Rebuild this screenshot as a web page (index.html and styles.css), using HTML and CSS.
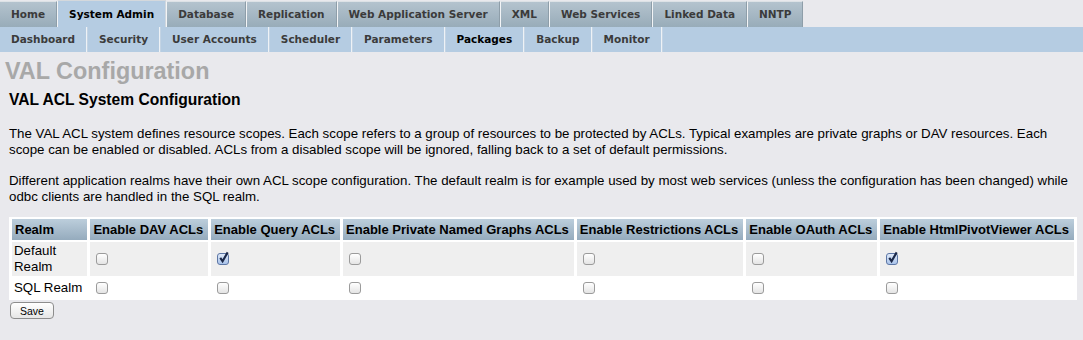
FILE: index.html
```html
<!DOCTYPE html>
<html lang="en">
<head>
    <meta charset="UTF-8">
    <title>VAL Configuration</title>
    <link rel="stylesheet" href="styles.css">
</head>
<body>
    <ul class="tabs">
        <li><a href="#">Home</a></li>
        <li class="active"><a href="#">System Admin</a></li>
        <li><a href="#">Database</a></li>
        <li><a href="#">Replication</a></li>
        <li><a href="#">Web Application Server</a></li>
        <li><a href="#">XML</a></li>
        <li><a href="#">Web Services</a></li>
        <li><a href="#">Linked Data</a></li>
        <li><a href="#">NNTP</a></li>
    </ul>
    <ul class="subtabs">
        <li><a href="#">Dashboard</a></li>
        <li><a href="#">Security</a></li>
        <li><a href="#">User Accounts</a></li>
        <li><a href="#">Scheduler</a></li>
        <li><a href="#">Parameters</a></li>
        <li class="active"><a href="#">Packages</a></li>
        <li><a href="#">Backup</a></li>
        <li><a href="#">Monitor</a></li>
    </ul>

    <div class="page">
        <h1>VAL Configuration</h1>
        <h3>VAL ACL System Configuration</h3>
        <p>The VAL ACL system defines resource scopes. Each scope refers to a group of resources to be protected by ACLs. Typical examples are private graphs or DAV resources. Each scope can be enabled or disabled. ACLs from a disabled scope will be ignored, falling back to a set of default permissions.</p>
        <p>Different application realms have their own ACL scope configuration. The default realm is for example used by most web services (unless the configuration has been changed) while odbc clients are handled in the SQL realm.</p>

        <form>
            <table class="listing">
                <tr>
                    <th>Realm</th>
                    <th>Enable DAV ACLs</th>
                    <th>Enable Query ACLs</th>
                    <th>Enable Private Named Graphs ACLs</th>
                    <th>Enable Restrictions ACLs</th>
                    <th>Enable OAuth ACLs</th>
                    <th>Enable HtmlPivotViewer ACLs</th>
                </tr>
                <tr class="odd">
                    <td>Default Realm</td>
                    <td><label class="cb"><input type="checkbox"><span><svg viewBox="0 0 14 14"><path d="M3.5 7.5 L6 11 L11.5 1.5"/></svg></span></label></td>
                    <td><label class="cb"><input type="checkbox" checked><span><svg viewBox="0 0 14 14"><path d="M3.5 7.5 L6 11 L11.5 1.5"/></svg></span></label></td>
                    <td><label class="cb"><input type="checkbox"><span><svg viewBox="0 0 14 14"><path d="M3.5 7.5 L6 11 L11.5 1.5"/></svg></span></label></td>
                    <td><label class="cb"><input type="checkbox"><span><svg viewBox="0 0 14 14"><path d="M3.5 7.5 L6 11 L11.5 1.5"/></svg></span></label></td>
                    <td><label class="cb"><input type="checkbox"><span><svg viewBox="0 0 14 14"><path d="M3.5 7.5 L6 11 L11.5 1.5"/></svg></span></label></td>
                    <td><label class="cb"><input type="checkbox" checked><span><svg viewBox="0 0 14 14"><path d="M3.5 7.5 L6 11 L11.5 1.5"/></svg></span></label></td>
                </tr>
                <tr>
                    <td>SQL Realm</td>
                    <td><label class="cb"><input type="checkbox"><span><svg viewBox="0 0 14 14"><path d="M3.5 7.5 L6 11 L11.5 1.5"/></svg></span></label></td>
                    <td><label class="cb"><input type="checkbox"><span><svg viewBox="0 0 14 14"><path d="M3.5 7.5 L6 11 L11.5 1.5"/></svg></span></label></td>
                    <td><label class="cb"><input type="checkbox"><span><svg viewBox="0 0 14 14"><path d="M3.5 7.5 L6 11 L11.5 1.5"/></svg></span></label></td>
                    <td><label class="cb"><input type="checkbox"><span><svg viewBox="0 0 14 14"><path d="M3.5 7.5 L6 11 L11.5 1.5"/></svg></span></label></td>
                    <td><label class="cb"><input type="checkbox"><span><svg viewBox="0 0 14 14"><path d="M3.5 7.5 L6 11 L11.5 1.5"/></svg></span></label></td>
                    <td><label class="cb"><input type="checkbox"><span><svg viewBox="0 0 14 14"><path d="M3.5 7.5 L6 11 L11.5 1.5"/></svg></span></label></td>
                </tr>
            </table>
            <button type="button" class="save">Save</button>
        </form>
    </div>
</body>
</html>
```

FILE: styles.css
```css
body {
    margin: 0;
    background-color: #e9e9ed;
    font-family: "Liberation Sans", Arial, sans-serif;
    font-size: 13px;
    color: #000;
}

/* top level tabs */
.tabs {
    list-style: none;
    margin: 0;
    padding: 0;
    display: flex;
    height: 27px;
}
.tabs li {
    margin-top: 1px;
    border-top: 1px solid #dde2e6;
    border-left: 1px solid #f2f4f6;
    border-right: 1px solid #8e9ea9;
    background: linear-gradient(#b4c3ce, #98acb9);
}
.tabs li:first-child {
    border-left: none;
}
.tabs li.active {
    margin-top: 0;
    background: #b5cce2;
    border-top-color: #d4d8dc;
    border-right-color: #d0d7de;
}
.tabs a {
    display: block;
    padding: 0 11px;
    line-height: 25px;
    font-family: "DejaVu Sans", Verdana, sans-serif;
    font-size: 10.5px;
    font-weight: bold;
    color: #3b3b3b;
    text-decoration: none;
}
.tabs li.active a {
    line-height: 26px;
    color: #000;
}

/* second level tabs */
.subtabs {
    list-style: none;
    margin: 0;
    padding: 0;
    display: flex;
    height: 25px;
    background-color: #b5cce2;
}
.subtabs li {
    border-right: 1px solid #eef2f6;
    box-shadow: 1px 0 0 #c4d4e4;
    margin-right: 1px;
}
.subtabs a {
    display: block;
    padding: 0 11px 0 11px;
    line-height: 25px;
    font-family: "DejaVu Sans", Verdana, sans-serif;
    font-size: 10.5px;
    font-weight: bold;
    color: #3b3b3b;
    text-decoration: none;
}
.subtabs li.active a {
    color: #000;
}

.page {
    padding: 0 6px 0 9px;
}
h1 {
    margin: 6px 0 0 -4px;
    font-size: 23.4px;
    line-height: 27px;
    color: #a8a8a8;
}
h3 {
    margin: 6px 0 0 0;
    font-size: 15.6px;
    line-height: 18px;
}
p {
    margin: 17px 0 0 0;
    font-size: 13.3px;
    line-height: 16px;
}
p + p {
    margin-top: 15px;
}

form {
    margin-top: 12px;
}
.listing {
    width: 100%;
    background-color: #fff;
    border-spacing: 3px 2px;
}
.listing th {
    white-space: nowrap;
    text-align: left;
    padding: 3px 5px 3px 3px;
    line-height: 15px;
    background: linear-gradient(#bccedc, #95abbd);
}
.listing td {
    padding: 1px 2px;
    font-size: 13.3px;
    line-height: 16px;
    vertical-align: middle;
}
.listing tr.odd td {
    background-color: #efefef;
}

/* checkboxes */
.cb input {
    display: none;
}
.cb span {
    position: relative;
    display: inline-block;
    width: 10px;
    height: 10px;
    margin: 3px 3px 3px 4px;
    border: 1px solid #9b9b9b;
    border-radius: 3px;
    background: linear-gradient(#ffffff, #e4e4e4);
    vertical-align: middle;
}
.cb svg {
    display: none;
    position: absolute;
    left: -1px;
    top: -3px;
    width: 13px;
    height: 13px;
}
.cb svg path {
    fill: none;
    stroke: #1b2848;
    stroke-width: 2.3;
}
.cb input:checked + span {
    border-color: #5d77a6;
    background: linear-gradient(#dfe9f8, #a9c3ea);
}
.cb input:checked + span svg {
    display: block;
}

.save {
    margin: 2px 0 0 1px;
    height: 17px;
    padding: 0 9px;
    font-family: "Liberation Sans", Arial, sans-serif;
    font-size: 10.5px;
    color: #000;
    border: 1px solid #8d8d8d;
    border-radius: 4px;
    background: linear-gradient(#ffffff, #e6e6e6);
}
```
